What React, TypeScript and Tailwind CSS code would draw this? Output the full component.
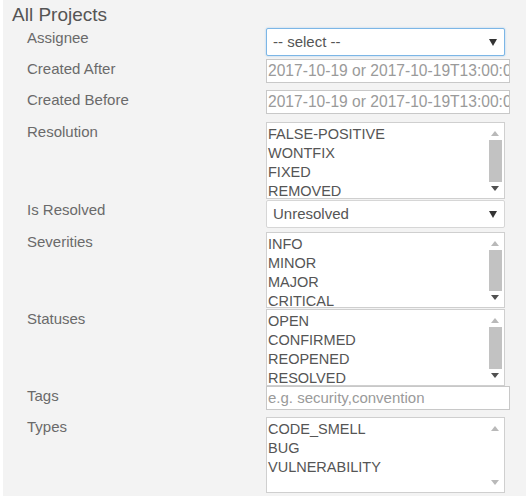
import React from "react";

const font = { fontFamily: '"Liberation Sans", Arial, sans-serif' };

function Tri({ up, color }: { up?: boolean; color: string }) {
  return (
    <svg width="8" height="5" viewBox="0 0 8 5" className="block">
      {up ? <polygon points="0,5 8,5 4,0" fill={color} /> : <polygon points="0,0 8,0 4,5" fill={color} />}
    </svg>
  );
}

function Select({ text, focus }: { text: string; focus?: boolean }) {
  return (
    <div
      className={`w-[239px] h-[28px] bg-white rounded-[2px] border flex items-center justify-between pl-[6px] pr-[7px] ${
        focus ? "border-[#7cb6e6] shadow-[0_0_2px_rgba(102,175,233,0.6)]" : "border-[#d6d6d6]"
      }`}
    >
      <span className="text-[15px] text-[#555]">{text}</span>
      <svg width="8" height="7" viewBox="0 0 8 7">
        <polygon points="0,0 8,0 4,7" fill="#333" />
      </svg>
    </div>
  );
}

function Input({ placeholder, size }: { placeholder: string; size: string }) {
  return (
    <div className="w-[244px] h-[24px] bg-white border border-[#c8c8c8] flex items-center pl-[1px] overflow-hidden whitespace-nowrap">
      <span className={`${size} text-[#9a9a9a]`}>{placeholder}</span>
    </div>
  );
}

function Listbox({ items, thumb, h }: { items: string[]; thumb: boolean; h: string }) {
  return (
    <div className={`w-[239px] ${h} bg-white border border-[#cfcfcf] flex overflow-hidden`}>
      <div className="flex-1 pt-[2px] pl-[1px] overflow-hidden">
        {items.map((it) => (
          <div key={it} className="text-[14.5px] leading-[19px] text-[#555] whitespace-nowrap">
            {it}
          </div>
        ))}
      </div>
      <div className="w-[16px] flex flex-col items-center justify-between pt-[8px] pb-[7px] mr-[1px]">
        <Tri up color="#b9b9b9" />
        {thumb && <div className="w-[13px] flex-1 bg-[#c2c2c2] my-[4px]" />}
        <Tri color={thumb ? "#505050" : "#b9b9b9"} />
      </div>
    </div>
  );
}

function Row({ label, children, mt }: { label: string; children: React.ReactNode; mt: string }) {
  return (
    <div className={`flex ${mt}`}>
      <div className="w-[263px] shrink-0 pl-[24px] text-[15px] leading-[20px] text-[#6a6a6a]">{label}</div>
      <div>{children}</div>
    </div>
  );
}

export default function App() {
  return (
    <div className="w-[529px] h-[502px] bg-white pl-[3px]" style={font}>
      <div className="w-[523px] h-[496px] bg-[#f3f3f3] pt-[4px]">
        <div className="pl-[9px] text-[19px] leading-[22px] text-[#555]">All Projects</div>
        <Row label="Assignee" mt="mt-[2px]">
          <Select text="-- select --" focus />
        </Row>
        <Row label="Created After" mt="mt-[3px]">
          <Input size="text-[15.6px]" placeholder="2017-10-19 or 2017-10-19T13:00:00" />
        </Row>
        <Row label="Created Before" mt="mt-[7px]">
          <Input size="text-[15.6px]" placeholder="2017-10-19 or 2017-10-19T13:00:00" />
        </Row>
        <Row label="Resolution" mt="mt-[8px]">
          <Listbox h="h-[77px]" thumb items={["FALSE-POSITIVE", "WONTFIX", "FIXED", "REMOVED"]} />
        </Row>
        <Row label="Is Resolved" mt="mt-[1px]">
          <Select text="Unresolved" />
        </Row>
        <Row label="Severities" mt="mt-[4px]">
          <Listbox h="h-[76px]" thumb items={["INFO", "MINOR", "MAJOR", "CRITICAL"]} />
        </Row>
        <Row label="Statuses" mt="mt-[1px]">
          <Listbox h="h-[77px]" thumb items={["OPEN", "CONFIRMED", "REOPENED", "RESOLVED"]} />
        </Row>
        <Row label="Tags" mt="mt-0">
          <Input size="text-[15px]" placeholder="e.g. security,convention" />
        </Row>
        <Row label="Types" mt="mt-[7px]">
          <Listbox h="h-[76px]" thumb={false} items={["CODE_SMELL", "BUG", "VULNERABILITY"]} />
        </Row>
      </div>
    </div>
  );
}
